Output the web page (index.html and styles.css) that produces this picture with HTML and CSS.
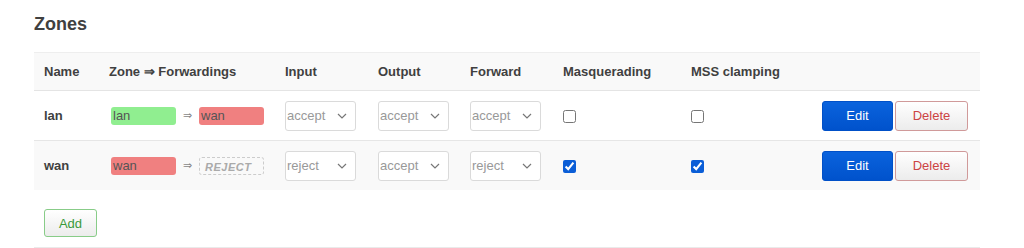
FILE: index.html
```
<!DOCTYPE html>
<html lang="en">
<head>
  <meta charset="UTF-8" />
  <title>Zones</title>
  <link rel="stylesheet" href="styles.css">
</head>
<body>
  <div class="section">
    <h3>Zones</h3>
    <table class="zones">
      <colgroup>
        <col style="width:65px"><col style="width:176px"><col style="width:93px"><col style="width:92px">
        <col style="width:93px"><col style="width:128px"><col style="width:128px"><col>
      </colgroup>
      <thead>
        <tr>
          <th>Name</th><th>Zone &rArr; Forwardings</th><th>Input</th><th>Output</th>
          <th>Forward</th><th>Masquerading</th><th>MSS clamping</th><th></th>
        </tr>
      </thead>
      <tbody>
        <tr>
          <td class="name">lan</td>
          <td><div class="fwd"><span class="zone lan">lan</span><span class="arrow">&rArr;</span><span class="zone wan">wan</span></div></td>
          <td><select><option>accept</option></select></td>
          <td><select><option>accept</option></select></td>
          <td><select><option>accept</option></select></td>
          <td><input type="checkbox"></td>
          <td><input type="checkbox"></td>
          <td class="actions"><button class="btn edit">Edit</button><button class="btn delete">Delete</button></td>
        </tr>
        <tr class="alt">
          <td class="name">wan</td>
          <td><div class="fwd"><span class="zone wan">wan</span><span class="arrow">&rArr;</span><span class="zone reject">REJECT</span></div></td>
          <td><select><option>reject</option></select></td>
          <td><select><option>accept</option></select></td>
          <td><select><option>reject</option></select></td>
          <td><input type="checkbox" checked></td>
          <td><input type="checkbox" checked></td>
          <td class="actions"><button class="btn edit">Edit</button><button class="btn delete">Delete</button></td>
        </tr>
      </tbody>
    </table>
    <div class="add-row">
      <button class="btn add">Add</button>
    </div>
  </div>
</body>
</html>
```

FILE: styles.css
```
body {
  margin: 0;
  font-family: "Liberation Sans", Arial, sans-serif;
  font-size: 13px;
  color: #404040;
  background: #fff;
}
.section {
  width: 946px;
  margin-left: 34px;
  border-bottom: 3px solid #eaeaea;
}
h3 {
  margin: 0;
  padding: 14px 0 18px;
  font-size: 18px;
  line-height: 20px;
  color: #404040;
}
.zones {
  width: 100%;
  border-collapse: collapse;
  table-layout: fixed;
}
.zones th {
  text-align: left;
  font-weight: bold;
  height: 37px;
  padding: 0 10px;
  background: #f9f9f9;
  border-top: 1px solid #eee;
  border-bottom: 1px solid #e4e4e4;
  white-space: nowrap;
}
.zones td {
  height: 49px;
  padding: 0 10px;
  border-bottom: 1px solid #e6e6e6;
  vertical-align: middle;
}
.zones tr.alt td {
  background: #f9f9f9;
  border-bottom: none;
}
.zones td.name {
  font-weight: bold;
}
.fwd {
  display: flex;
  align-items: center;
  margin-left: 2px;
}
.zone {
  width: 65px;
  height: 18px;
  line-height: 18px;
  border-radius: 3px;
  padding-left: 2px;
  box-sizing: border-box;
  color: #555;
  font-size: 13px;
}
.zone.lan { background: #90ee90; }
.zone.wan { background: #f08080; }
.zone.reject {
  border: 1px dashed #ccc;
  color: #aaa;
  font-style: italic;
  font-weight: bold;
  font-size: 11px;
  padding-left: 5px;
  letter-spacing: 0.5px;
}
.arrow {
  width: 23px;
  text-align: center;
  color: #888;
  font-size: 11px;
}
select {
  appearance: none;
  width: 71px;
  height: 30px;
  padding: 0 0 0 1px;
  font-family: inherit;
  font-size: 13px;
  color: #999;
  border: 1px solid #dadada;
  border-radius: 3px;
  background: #fff url("data:image/svg+xml,%3Csvg xmlns='http://www.w3.org/2000/svg' width='10' height='6'%3E%3Cpath d='M1 1l4 4 4-4' fill='none' stroke='%23777' stroke-width='1.2'/%3E%3C/svg%3E") no-repeat right 8px center;
}
input[type=checkbox] {
  width: 13px;
  height: 13px;
  margin: 5px 0 0 0;
  accent-color: #0b5ed7;
}
.actions {
  text-align: right;
  padding-right: 12px !important;
  white-space: nowrap;
}
.btn {
  font-family: inherit;
  font-size: 13px;
  height: 30px;
  border-radius: 3px;
  cursor: pointer;
  vertical-align: middle;
}
.edit {
  width: 71px;
  color: #fff;
  background: linear-gradient(#0a63dd, #0052cc);
  border: 1px solid #0050c8;
  margin-right: 2px;
}
.delete {
  width: 73px;
  color: #c44;
  background: linear-gradient(#fff, #ececec);
  border: 1px solid #d09a9a;
}
.add-row {
  padding: 19px 10px 10px;
}
.add {
  width: 53px;
  height: 28px;
  color: #3a9a3a;
  background: linear-gradient(#fff, #ececec);
  border: 1px solid #8c8;
}
```
